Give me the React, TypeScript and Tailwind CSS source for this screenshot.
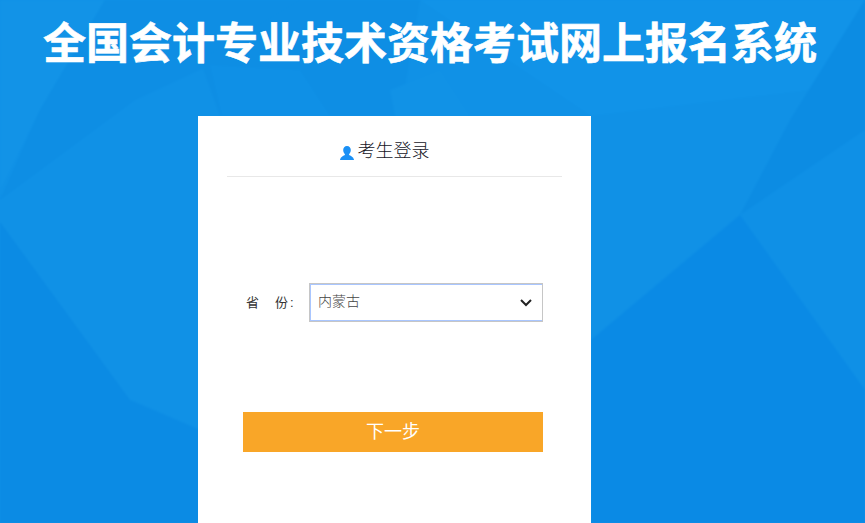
import React from "react";

const cjk = "font-['Liberation_Sans','Noto_Sans_CJK_SC',sans-serif]";

// faceted background drawing
const Backdrop = () => (
  <svg className="absolute inset-0 w-full h-full blur-[1px]" viewBox="0 0 865 523" preserveAspectRatio="none">
    <rect width="865" height="523" fill="#1091e6" />
    <polygon points="0,0 105,0 40,110 0,190" fill="#1293e7" />
    <polygon points="105,0 320,0 300,20 210,65 135,100 0,200 40,110" fill="#0e8ee4" />
    <polygon points="200,60 300,0 420,0 400,116 220,116" fill="#0e8ee4" />
    <polygon points="210,65 300,70 330,116 222,116" fill="#0f90e6" />
    <polygon points="390,90 440,70 470,116 395,116" fill="#1192e6" />
    <polygon points="0,222 130,400 200,430 200,523 0,523" fill="#0b8be4" />
    <polygon points="420,0 865,0 810,90 591,116" fill="#1193e8" />
    <polygon points="740,215 790,120 865,0 865,130" fill="#0c8ce3" />
    <polygon points="740,215 865,130 865,390" fill="#0f90e6" />
    <polygon points="740,215 865,390 865,523 591,523 591,340" fill="#0a8ae5" />
  </svg>
);

const UserIcon = () => (
  <svg width="14" height="14" viewBox="0 0 14 14" className="mt-[3px]">
    <path
      d="M7 0C4.600 0 3.200 1.800 3.200 4c0 1.700.7 3 1.600 3.900.3.4.2 1-.3 1.300C3 10 .8 10.600 0 13.700V14h14v-.3c-.8-3.100-3-3.700-4.500-4.500-.5-.3-.6-.9-.3-1.300C10.100 7 10.800 5.700 10.800 4 10.800 1.800 9.400 0 7 0z"
      fill="#1a90f5"
    />
  </svg>
);

export default function App() {
  return (
    <div className={`relative w-full h-[523px] overflow-hidden bg-[#0f90e6] ${cjk}`}>
      <Backdrop />
      <div className="relative flex flex-col">
        <h1 className="h-[116px] pt-[18px] pr-[5px] text-center text-[43px] leading-[52px] font-bold text-white [-webkit-text-stroke:0.6px_white]">
          全国会计专业技术资格考试网上报名系统
        </h1>

        <div className="ml-[198px] w-[393px] h-[407px] bg-white">
          <div className="mx-[29px] w-[335px] h-[61px] border-b border-[#e8e8e8] flex justify-center items-center gap-[4px] pt-[10px] pr-[20px] text-[18px] text-[#15151f] font-light">
            <UserIcon />
            <span>考生登录</span>
          </div>

          <div className="mt-[106px] flex items-center pl-[48px]">
            <label className="w-[63px] flex text-[13px] text-[#333]">
              <span className="w-[29px]">省</span>
              <span>份<span className="ml-[2px]">:</span></span>
            </label>
            <div className="w-[234px] h-[39px] border border-[#c6c6c6] shadow-[inset_1px_1px_0_#a9c6ff,inset_0_-1px_0_#a9c6ff] flex items-center justify-between pl-[8px] pr-[9px]">
              <span className="text-[14px] text-[#444] -translate-y-[1px] font-light">内蒙古</span>
              <svg width="14" height="9" viewBox="0 0 14 9">
                <path d="M2 2l5 5 5-5" fill="none" stroke="#222" strokeWidth="2" />
              </svg>
            </div>
          </div>

          <button className="block mt-[90px] ml-[45px] w-[300px] h-[40px] bg-[#f9a628] text-white text-[18px] text-center">
            下一步
          </button>
        </div>
      </div>
    </div>
  );
}
